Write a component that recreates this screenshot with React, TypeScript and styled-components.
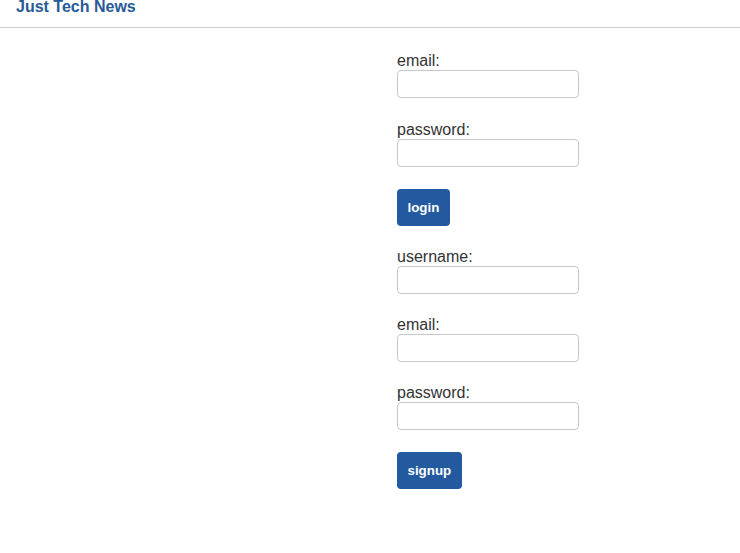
import React from "react";
import styled, { createGlobalStyle } from "styled-components";

const GlobalStyle = createGlobalStyle`
  html, body {
    margin: 0;
    padding: 0;
    background: #ffffff;
  }
  body {
    font-family: "Liberation Sans", Arial, sans-serif;
    color: #333333;
  }
`;

const Header = styled.header`
  display: flex;
  align-items: flex-start;
  height: 27px;
  padding: 0 16px;
  border-bottom: 1px solid #cccccc;
`;

const Title = styled.h1`
  margin: 0;
  font-size: 16px;
  line-height: 14px;
  font-weight: bold;
  color: #285a98;
`;

const Main = styled.main`
  display: flex;
  padding: 24px 0 0 397px;
`;

const Forms = styled.div`
  display: flex;
  flex-direction: column;
  gap: 22px;
  width: 182px;
`;

const Form = styled.form<{ $fieldGap: number }>`
  display: flex;
  flex-direction: column;
  gap: ${(p) => p.$fieldGap}px;
`;

const Fields = styled.div<{ $fieldGap: number }>`
  display: flex;
  flex-direction: column;
  gap: ${(p) => p.$fieldGap}px;
`;

const Field = styled.div`
  display: flex;
  flex-direction: column;
`;

const Label = styled.label`
  font-size: 16px;
  line-height: 18px;
  color: #333333;
`;

const Input = styled.input`
  box-sizing: border-box;
  width: 182px;
  height: 28px;
  margin: 0;
  padding: 4px 8px;
  border: 1px solid #c8c8c8;
  border-radius: 4px;
  background: #ffffff;
  font-family: "Liberation Sans", Arial, sans-serif;
  font-size: 14px;
  outline: none;
`;

const Button = styled.button`
  align-self: flex-start;
  box-sizing: border-box;
  height: 37px;
  margin: 0;
  padding: 0 10.5px;
  border: none;
  border-radius: 4px;
  background: #235a9f;
  color: #ffffff;
  font-family: "Liberation Sans", Arial, sans-serif;
  font-size: 13.333px;
  font-weight: bold;
  cursor: pointer;
`;

type FieldDef = { id: string; label: string; type: string };

const loginFields: FieldDef[] = [
  { id: "email-login", label: "email:", type: "email" },
  { id: "password-login", label: "password:", type: "password" },
];

const signupFields: FieldDef[] = [
  { id: "username-signup", label: "username:", type: "text" },
  { id: "email-signup", label: "email:", type: "email" },
  { id: "password-signup", label: "password:", type: "password" },
];

function AuthForm({
  fields,
  fieldGap,
  action,
}: {
  fields: FieldDef[];
  fieldGap: number;
  action: string;
}) {
  return (
    <Form $fieldGap={22} onSubmit={(e) => e.preventDefault()}>
      <Fields $fieldGap={fieldGap}>
        {fields.map((f) => (
          <Field key={f.id}>
            <Label htmlFor={f.id}>{f.label}</Label>
            <Input id={f.id} type={f.type} />
          </Field>
        ))}
      </Fields>
      <Button type="submit">{action}</Button>
    </Form>
  );
}

export default function App() {
  return (
    <>
      <GlobalStyle />
      <Header>
        <Title>Just Tech News</Title>
      </Header>
      <Main>
        <Forms>
          <AuthForm fields={loginFields} fieldGap={23} action="login" />
          <AuthForm fields={signupFields} fieldGap={22} action="signup" />
        </Forms>
      </Main>
    </>
  );
}
